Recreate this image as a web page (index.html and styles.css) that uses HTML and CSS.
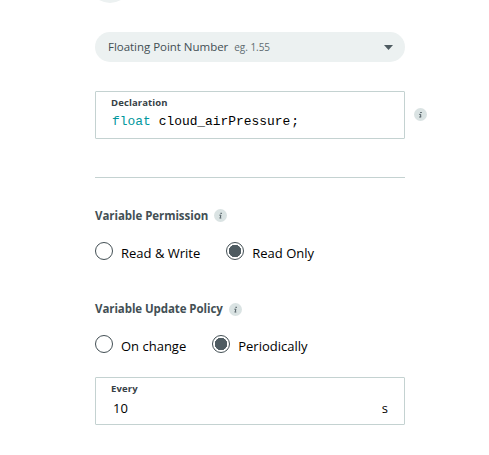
FILE: index.html
```html
<!DOCTYPE html>
<html lang="en">
<head>
<meta charset="utf-8">
<title>Variable</title>
<link rel="stylesheet" href="styles.css">
</head>
<body>
<main class="form">
  <div class="knob"><svg width="22" height="3" viewBox="0 0 22 3"><path d="M0 0h22Q16 3 11 3T0 0z" fill="#ecf1f1"/></svg></div>
  <div class="select"><span>Floating Point Number</span><small>eg. 1.55</small><svg class="caret" width="9" height="5" viewBox="0 0 9 5"><path d="M0 0h9L4.5 5z" fill="#4e5b61"/></svg></div>
  <div class="declaration">
    <div class="field"><label class="caption">Declaration</label><code class="code"><span class="type">float</span><span class="name">cloud_airPressure</span><span>;</span></code></div>
    <svg class="info" viewBox="0 0 13 13"><circle cx="6.5" cy="6.5" r="6.5" fill="#dae3e3"/><path d="M6.2 4.5h1.6M5.2 6.4h1.5v2.5M5.2 9h2" fill="none" stroke="#4e5b61" stroke-width="1"/></svg>
  </div>
  <hr class="rule">
  <section class="group">
    <h2 class="heading">Variable Permission<svg class="info" viewBox="0 0 13 13"><circle cx="6.5" cy="6.5" r="6.5" fill="#dae3e3"/><path d="M6.4 4.3h1.6M5.4 6.2h1.5L6.3 8.8M5.5 9h1.8" fill="none" stroke="#4e5b61" stroke-width="1"/></svg></h2>
    <div class="options"><span class="option"><i class="radio"></i><span>Read &amp; Write</span></span><span class="option"><i class="radio on"></i><span>Read Only</span></span></div>
  </section>
  <section class="group policy">
    <h2 class="heading update">Variable Update Policy<svg class="info" viewBox="0 0 13 13"><circle cx="6.5" cy="6.5" r="6.5" fill="#dae3e3"/><path d="M6.4 4.3h1.6M5.4 6.2h1.5L6.3 8.8M5.5 9h1.8" fill="none" stroke="#4e5b61" stroke-width="1"/></svg></h2>
    <div class="options"><span class="option"><i class="radio"></i><span>On change</span></span><span class="option"><i class="radio on"></i><span>Periodically</span></span></div>
  </section>
  <div class="field every"><label class="caption">Every</label><div class="value"><span>10</span><span>s</span></div></div>
</main>
</body>
</html>
```
FILE: styles.css
```css
* { box-sizing: border-box; }
body { margin: 0; background: #fff; color: #000; font: 13px/18px "Open Sans", sans-serif; overflow: hidden; }
.form { width: 310px; margin-left: 95px; }
.knob { display: flex; height: 3px; margin-left: 4px; }
.select { display: flex; align-items: center; height: 30px; margin-top: 29px; padding: 0 12px 0 13px; border-radius: 15px; background: #ecf1f1; color: #434f54; font-size: 11.5px; letter-spacing: -.03px; }
.select small { margin-left: 6px; font-size: 10px; color: #616c71; }
.caret { margin-left: auto; }
.declaration { display: flex; align-items: center; width: 332px; height: 48px; margin-top: 29px; gap: 9px; }
.declaration .info { margin-bottom: 2px; }
.field { width: 310px; height: 48px; border: 1px solid #c4d2d1; border-radius: 1px; }
.caption { display: block; padding: 4px 0 0 15px; font-size: 9.5px; line-height: 13px; letter-spacing: .12px; font-weight: 700; color: #374146; }
.code { display: flex; padding: 2px 0 0 16px; font: 12.9px/22px "Liberation Mono", monospace; }
.type { color: #00979d; margin-right: 8px; }
.name { margin-right: 1px; }
.info { width: 13px; height: 13px; flex: none; }
.rule { margin: 38px 0 0; border: 0; border-top: 1px solid #c4d2d1; }
.group { margin-top: 29px; }
.heading { display: flex; align-items: center; gap: 6px; margin: 0; font-size: 11.5px; line-height: 18px; letter-spacing: -.06px; color: #434f54; }
.heading .info { margin-bottom: 1px; }
.update { letter-spacing: -.08px; }
.update .info { margin-bottom: 0; }
.options { display: flex; gap: 26px; margin-top: 17px; }
.option { display: flex; gap: 8px; height: 20px; line-height: 23px; }
.radio { width: 18px; height: 18px; border: 1px solid #434f54; border-radius: 50%; }
.on { background: radial-gradient(circle, #4e5b61 6px, #fff 6.5px); }
.policy { margin-top: 38px; }
.every { margin-top: 22px; }
.value { display: flex; justify-content: space-between; padding: 4px 16px 0 17px; }
```
